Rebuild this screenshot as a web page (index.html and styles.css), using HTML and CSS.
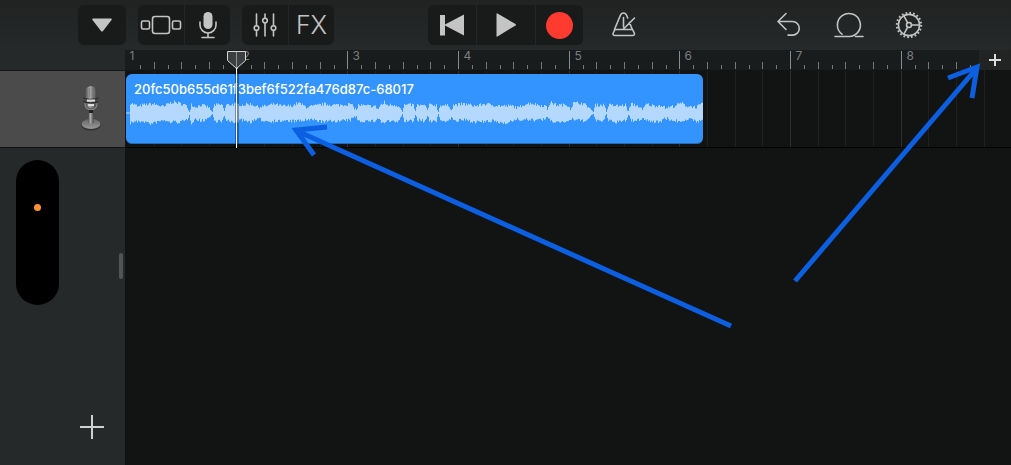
FILE: index.html
```html
<!DOCTYPE html>
<html lang="en">
<head>
  <meta charset="UTF-8" />
  <meta name="viewport" content="width=device-width, initial-scale=1.0"/>
  <title>Tracks</title>
  <link rel="stylesheet" href="styles.css">
</head>
<body>
  <header class="toolbar">
    <div class="tools">
      <div class="group">
        <button class="tool" aria-label="Browser">
          <svg width="24" height="20" viewBox="0 0 24 20"><path class="solid" d="M3 3.500h18q1.500 0 .5 1.500l-8.500 11q-1 1.200-2 0L2.500 5q-1-1.500.5-1.500z"/></svg>
        </button>
      </div>
      <div class="group">
        <button class="tool" aria-label="Instruments">
          <svg width="42" height="24" viewBox="0 0 42 24"><rect x="1.500" y="8" width="8" height="8" rx="1.500"/><rect x="12.500" y="3.500" width="17" height="17" rx="2.500"/><rect x="32.500" y="8" width="8" height="8" rx="1.500"/></svg>
        </button>
        <button class="tool" aria-label="Microphone">
          <svg width="22" height="28" viewBox="0 0 22 28"><rect class="solid" x="6.500" y="1" width="9" height="17" rx="4.500"/><path d="M3 11v3a8 8 0 0 0 16 0v-3M11 22v4M5 26.500h12"/></svg>
        </button>
      </div>
      <div class="group">
        <button class="tool" aria-label="Track controls">
          <svg width="24" height="24" viewBox="0 0 24 24"><path d="M3.500 1v11.500M3.500 17.500V23M12 1v4M12 10v13M20.500 1v11.500M20.500 17.500V23"/><circle cx="3.500" cy="15" r="2.300"/><circle cx="12" cy="7.500" r="2.300"/><circle cx="20.500" cy="15" r="2.300"/></svg>
        </button>
        <button class="tool fx">FX</button>
      </div>
    </div>

    <div class="group">
      <button class="tool play" aria-label="Go to beginning">
        <svg width="26" height="22" viewBox="0 0 26 22"><path class="solid" d="M1 1h5v9.500L25 .5v21L6 11.500V21.500H1z"/></svg>
      </button>
      <button class="tool play wide" aria-label="Play">
        <svg width="22" height="24" viewBox="0 0 22 24"><path class="solid" d="M1.500 1q0-1 1-.5l18 10.500q1 .8 0 1.500l-18 11q-1 .5-1-.5z"/></svg>
      </button>
      <button class="tool play" aria-label="Record"><span class="record"></span></button>
    </div>

    <div class="tools right">
      <button class="tool metronome" aria-label="Metronome">
        <svg width="26" height="28" viewBox="0 0 26 28"><path d="M3.500 18.500 9.300 4.500q1-2.500 3.200-2.500t3.200 2.500l1 2.500M18.500 11.500l2.800 7M12.500 6.500v9.500M12.500 18 23.500 7"/><path d="M4 18.500h17.500l1.800 3.500q.8 2.500-1.800 2.500H4q-2.600 0-1.800-2.500z"/></svg>
      </button>
      <button class="tool" aria-label="Undo">
        <svg width="26" height="26" viewBox="0 0 26 26"><path d="M10 1.500 2 9.500l8 8M2.500 9.500h14a6.800 6.800 0 0 1 0 13.600h-4.500"/></svg>
      </button>
      <button class="tool" aria-label="Loops">
        <svg width="30" height="28" viewBox="0 0 30 28"><path d="M1 25.500h14a11.500 11.500 0 1 0-7-2.300M21.500 25.500H29"/></svg>
      </button>
      <button class="tool" aria-label="Settings">
        <svg width="28" height="28" viewBox="0 0 28 28"><circle cx="14" cy="14" r="10.600"/><circle class="teeth" cx="14" cy="14" r="12.200"/><circle cx="14" cy="14" r="2.500"/><path d="M16.500 14H24M12.700 11.800 9 5.200M12.700 16.200 9 22.800"/></svg>
      </button>
    </div>
  </header>

  <main class="workspace">
    <aside class="sidebar">
      <div class="sidebar-top"></div>
      <div class="track-head">
        <svg width="22" height="46" viewBox="0 0 22 46" role="img" aria-label="Audio recorder track">
          <defs>
            <linearGradient id="metal"><stop offset="0" stop-color="#555"/><stop offset=".4" stop-color="#aaa"/><stop offset="1" stop-color="#444"/></linearGradient>
            <linearGradient id="foot" x2="0" y2="1"><stop offset="0" stop-color="#666"/><stop offset="1" stop-color="#999"/></linearGradient>
          </defs>
          <ellipse cx="11" cy="40" rx="10" ry="5.500" fill="#333"/>
          <ellipse cx="11" cy="39" rx="9.500" ry="5" fill="url(#foot)"/>
          <path d="M9 26h4l.7 12q-2.700 1.500-5.400 0z" fill="url(#metal)"/>
          <path d="M5 18q0 6.500 6 6.500t6-6.500" fill="none" stroke="#888" stroke-width="1.300"/>
          <rect x="5.500" y="1" width="11" height="22" rx="5.500" fill="url(#metal)"/>
          <path d="M7.500 5v7M9.500 3v9M12.500 3v9M14.500 5v7" stroke="#777" stroke-width=".7"/>
          <path d="M3.500 13q7.500 3 15 0M3.500 16.500q7.500 3 15 0" fill="none" stroke="#2a2a2a" stroke-width="1.300"/>
          <path d="M7 15.500h8M8 20h6" stroke="#ddd" stroke-width="2"/>
          <path d="M9 25h4v3H9z" fill="#222"/>
        </svg>
      </div>
      <div class="sidebar-rest">
        <button class="add-track" aria-label="Add track">
          <svg width="24" height="24" viewBox="0 0 24 24"><path d="M12 0v24M0 12h24"/></svg>
        </button>
      </div>
      <div class="island"><span class="dot"></span></div>
      <div class="handle"></div>
    </aside>

    <section class="timeline">
      <div class="ruler-row">
        <svg class="ruler" id="ruler"></svg>
        <button class="add-section" aria-label="Add section">
          <svg width="12" height="12" viewBox="0 0 12 12"><path d="M6 0v12M0 6h12"/></svg>
        </button>
      </div>
      <div class="lane">
        <svg class="grid" id="grid"></svg>
        <div class="clip">
          <div class="clip-name">20fc50b655d61f3bef6f522fa476d87c-68017</div>
          <svg class="wave" viewBox="0 0 577 28" preserveAspectRatio="none"><path id="wave"/></svg>
        </div>
      </div>
      <div class="playhead">
        <svg width="20" height="98" viewBox="0 0 20 98"><path class="shade" d="M10 19v79"/><path class="cap" d="M.5 1.500h18v9l-9 8-9-8z"/><path class="mark" d="M9.500 2v16"/><path class="stem" d="M9.500 18v80"/></svg>
      </div>
    </section>
  </main>

  <svg class="arrows" width="1011" height="465" viewBox="0 0 1011 465">
    <path d="M731 326 296 130.500M327 127l-31 3 18 25" />
    <path d="M795 281 976 69M948 78l29-11-5 31"/>
  </svg>

  <script src="script.js"></script>
</body>
</html>
```
FILE: styles.css
```css
* {
  box-sizing: border-box;
}
body {
  margin: 0;
  min-height: 100vh;
  display: flex;
  flex-direction: column;
  position: relative;
  overflow: hidden;
  background: #121414;
  color: #c4c4c4;
  font-family: Inter, "Liberation Sans", sans-serif;
}
button {
  margin: 0;
  padding: 0;
  border: none;
  background: none;
  color: inherit;
  font: inherit;
  cursor: pointer;
}
svg {
  display: block;
}

/* toolbar */
.toolbar {
  display: grid;
  grid-template-columns: 1fr auto 1fr;
  align-items: center;
  height: 50px;
  padding: 0 78px;
  background: linear-gradient(#212322, #25292a);
}
.tools {
  display: flex;
  gap: 12px;
}
.group {
  display: flex;
  border-radius: 6px;
  overflow: hidden;
}
.tool {
  display: flex;
  align-items: center;
  justify-content: center;
  width: 48px;
  height: 40px;
}
.group .tool {
  background: #191a1a;
}
.group .tool:not(:only-child) {
  width: 46px;
}
.group .tool + .tool {
  border-left: 1px solid #242727;
}
.group .play:not(:only-child) {
  width: 48px;
}
.group .wide:not(:only-child) {
  width: 59px;
}
.tool svg {
  fill: none;
  stroke: #c4c4c4;
  stroke-width: 1.6;
  stroke-linecap: round;
  stroke-linejoin: round;
}
.tool .solid {
  fill: #c4c4c4;
  stroke: none;
}
.tool .teeth {
  stroke-width: 2;
  stroke-linecap: butt;
  stroke-dasharray: 1.7 2.13;
}
.fx {
  font-size: 25px;
  font-weight: 300;
}
.record {
  width: 27px;
  height: 27px;
  border-radius: 50%;
  background: #ff3b30;
}
.metronome {
  margin-left: 17px;
  margin-right: auto;
}

/* sidebar */
.workspace {
  flex: 1;
  display: flex;
}
.sidebar {
  position: relative;
  display: flex;
  flex-direction: column;
  width: 125px;
  background: #25292a;
}
.sidebar-top {
  height: 21px;
  border-bottom: 1px solid #151717;
}
.track-head {
  display: flex;
  align-items: center;
  justify-content: flex-end;
  height: 77px;
  padding: 0 23px 2px 0;
  background: #4b4b4c;
  border-bottom: 1px solid #111;
}
.sidebar-rest {
  flex: 1;
  display: flex;
  align-items: flex-end;
  justify-content: flex-end;
  padding: 0 21px 26px 0;
}
.add-track svg {
  stroke: #d0d0d0;
  stroke-width: 2;
}
.island {
  position: absolute;
  left: 16px;
  top: 110px;
  width: 43px;
  height: 145px;
  padding-top: 44px;
  border-radius: 22px;
  background: #000;
}
.dot {
  display: block;
  width: 7px;
  height: 7px;
  margin: 0 auto;
  border-radius: 50%;
  background: #ff9230;
}
.handle {
  position: absolute;
  right: 2px;
  top: 203px;
  width: 4px;
  height: 26px;
  border-radius: 2px;
  background: #515455;
}

/* timeline */
.timeline {
  position: relative;
  flex: 1;
  min-width: 0;
}
.ruler-row {
  display: flex;
  height: 20px;
  background: #191c1d;
}
.ruler {
  flex: 1;
  min-width: 0;
  height: 20px;
  overflow: visible;
}
.ruler text {
  fill: #7c7e7e;
  font-size: 12px;
}
.ruler line {
  stroke: #777979;
}
.ruler .bar {
  stroke: #8b8d8d;
}
.add-section {
  display: flex;
  align-items: center;
  justify-content: center;
  width: 32px;
  background: #222424;
}
.add-section svg {
  stroke: #dcdcdc;
  stroke-width: 2;
}
.lane {
  display: grid;
  height: 78px;
  border-bottom: 1px solid #000;
}
.grid {
  grid-area: 1 / 1;
  width: 100%;
  height: 77px;
}
.grid line {
  stroke: #1f2121;
}
.grid .bar {
  stroke: #2e3030;
}
.clip {
  grid-area: 1 / 1;
  width: 577px;
  height: 70px;
  margin: 4px 0 0 1px;
  padding-top: 7px;
  border-radius: 6px;
  border-bottom: 1px solid #246bb8;
  background: #3394ff;
  overflow: hidden;
}
.clip-name {
  padding-left: 8px;
  color: #fff;
  font-size: 13px;
  font-weight: 500;
  line-height: 16px;
}
.wave {
  width: 100%;
  height: 28px;
  margin-top: 2px;
  fill: #b5d8ff;
}
.playhead {
  position: absolute;
  left: 102px;
  top: 0;
}
.playhead path {
  fill: none;
}
.playhead .stem {
  stroke: #fff;
}
.playhead .shade {
  stroke: rgba(0, 0, 0, 0.35);
  stroke-width: 4;
}
.playhead .cap {
  fill: #3c3e3f;
  stroke: #d5d5d5;
}
.playhead .mark {
  stroke: #909292;
}

.arrows {
  position: absolute;
  left: 0;
  top: 0;
  fill: none;
  stroke: #0b5fe0;
  stroke-width: 5;
  pointer-events: none;
}
```
FILE: script.js
```javascript
const BAR = 332 / 3; // width of one bar
const START = 1;
const ruler = document.getElementById("ruler");
const grid = document.getElementById("grid");

function add(parent, tag, attrs, text) {
  const el = document.createElementNS("http://www.w3.org/2000/svg", tag);
  for (const key in attrs) el.setAttribute(key, attrs[key]);
  if (text) el.textContent = text;
  parent.appendChild(el);
}

// 8 ticks per bar
function drawTicks() {
  ruler.replaceChildren();
  grid.replaceChildren();
  const rulerWidth = ruler.parentNode.clientWidth - 32;
  const gridWidth = ruler.parentNode.clientWidth;
  for (let i = 0; START + i * BAR / 8 < gridWidth; i++) {
    const x = START + Math.round(i * BAR / 8) + 0.5;
    const isBar = i % 8 === 0;
    if (i > 0 && x < rulerWidth) {
      const top = isBar ? 1 : i % 2 === 0 ? 12 : 15;
      add(ruler, "line", { x1: x, x2: x, y1: top, y2: 19, class: isBar ? "bar" : "tick" });
    }
    if (isBar && x < rulerWidth - 16) {
      add(ruler, "text", { x: i === 0 ? x + 3 : x + 5, y: 10 }, String(i / 8 + 1));
    }
    if (i % 2 === 0 && i > 0) {
      add(grid, "line", { x1: x, x2: x, y1: 0, y2: 77, class: isBar ? "bar" : "beat" });
    }
  }
}
drawTicks();
window.addEventListener("resize", drawTicks);

// loudness points of the recording: position, level above, level below
const levels = [
  [0, 1, 1], [3, 1, 1], [4, 10, 10], [9, 8, 8], [12, 6, 9], [16, 8, 8], [25, 9, 11], [31, 8, 9],
  [38, 6, 7], [41, 9, 9], [46, 11, 9], [52, 10, 9], [59, 8, 8], [62, 4, 5], [63, 1, 2], [65, 9, 10],
  [68, 6, 6], [75, 8, 8], [82, 6, 5], [86, 1, 1], [88, 8, 8], [96, 8, 8], [98, 2, 3], [100, 8, 8],
  [109, 9, 9], [116, 8, 7], [124, 9, 9], [132, 6, 6], [140, 7, 8], [148, 9, 8], [155, 7, 8],
  [165, 7, 8], [172, 10, 8], [180, 6, 7], [189, 7, 7], [197, 9, 9], [206, 8, 8], [215, 8, 8],
  [224, 9, 7], [230, 3, 3], [232, 8, 8], [240, 7, 8], [248, 7, 8], [252, 4, 5], [258, 8, 8],
  [254, 8, 8], [256, 9, 10], [258, 11, 10], [260, 8, 8], [268, 8, 9], [273, 7, 8], [276, 1, 1],
  [278, 8, 8], [287, 8, 8], [289, 2, 2], [291, 8, 7], [299, 7, 8], [301, 3, 3], [303, 8, 8],
  [310, 8, 8], [312, 1, 1], [314, 8, 8], [323, 7, 7], [325, 3, 4], [327, 8, 8], [338, 9, 7],
  [350, 7, 9], [358, 9, 9], [366, 8, 8], [376, 7, 10], [386, 7, 8], [392, 5, 6], [396, 8, 7],
  [404, 10, 7], [412, 8, 7], [419, 7, 6], [421, 4, 5], [424, 11, 8], [430, 8, 9], [442, 8, 8],
  [444, 4, 7], [447, 10, 6], [455, 10, 8], [461, 7, 7], [465, 3, 2], [467, 1, 1], [469, 8, 8],
  [478, 8, 7], [480, 1, 1], [482, 8, 8], [492, 7, 9], [499, 8, 8], [502, 2, 2], [505, 9, 8],
  [512, 7, 7], [516, 3, 5], [520, 9, 7], [528, 7, 9], [535, 8, 8], [539, 5, 5], [548, 7, 8],
  [555, 10, 8], [560, 7, 6], [570, 6, 8], [576, 9, 8]
].sort((a, b) => a[0] - b[0]);

let seed = 7;
function jitter() {
  seed = (seed * 16807) % 2147483647;
  return (seed / 2147483647 - 0.5) * 3.4;
}

let upper = "";
let lower = "";
let n = 0;
for (let x = 0; x < 577; x++) {
  while (n < levels.length - 2 && levels[n + 1][0] <= x) n++;
  const [x0, u0, d0] = levels[n];
  const [x1, u1, d1] = levels[n + 1];
  const t = (x - x0) / (x1 - x0);
  let up = u0 + (u1 - u0) * t;
  let down = d0 + (d1 - d0) * t;
  if (up > 3) {
    up += jitter();
    down += jitter();
  }
  if (x < 4) up = down = 0.5;
  upper += `L${x} ${(14 - up).toFixed(1)}H${x + 1}`;
  lower = `L${x + 1} ${(14 + down).toFixed(1)}H${x}` + lower;
}
document.getElementById("wave").setAttribute("d", "M0 14" + upper + lower + "Z");
```
